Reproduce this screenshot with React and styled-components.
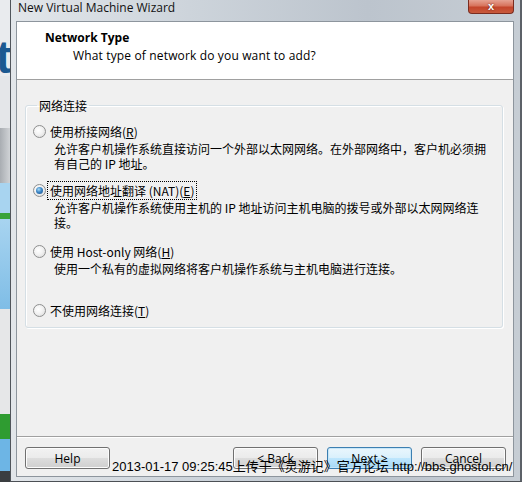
import React from 'react';
import styled, { createGlobalStyle } from 'styled-components';

const GlobalStyle = createGlobalStyle`
  html, body {
    margin: 0;
    padding: 0;
  }
  body {
    width: 522px;
    height: 482px;
    overflow: hidden;
    background: #e6e8ec;
    font-family: "Open Sans", "Noto Sans CJK SC", sans-serif;
    font-size: 12px;
    color: #000;
  }
`;

const options = [
  {
    id: 'bridged',
    label: <>使用桥接网络(<u>R</u>)</>,
    desc: ['允许客户机操作系统直接访问一个外部以太网网络。在外部网络中，客户机必须拥', '有自己的 IP 地址。'],
    gap: 0,
  },
  {
    id: 'nat',
    label: <>使用网络地址翻译 (NAT)(<u>E</u>)</>,
    desc: ['允许客户机操作系统使用主机的 IP 地址访问主机电脑的拨号或外部以太网网络连', '接。'],
    gap: 12,
    checked: true,
  },
  {
    id: 'host',
    label: <>使用 Host-only 网络(<u>H</u>)</>,
    desc: ['使用一个私有的虚拟网络将客户机操作系统与主机电脑进行连接。'],
    gap: 14,
  },
  {
    id: 'none',
    label: <>不使用网络连接(<u>T</u>)</>,
    desc: [],
    gap: 27,
  },
];

const desktopBlocks = [
  { h: 38, bg: '#e9ebee' },
  { h: 38, bg: '#e9ebee', glyph: 't' },
  { h: 52, bg: '#e4e6e9' },
  { h: 55, bg: 'linear-gradient(to right, #a9adb2, #d0d3d6)' },
  { h: 30, bg: '#a8d4f0' },
  { h: 6, bg: '#39a33a' },
  { h: 90, bg: 'linear-gradient(to bottom, #a8d4f0, #7fbde6)' },
  { h: 105, bg: '#e6e7e8' },
  { h: 25, bg: '#2f9c31' },
  { h: 32, bg: '#6db5e5' },
  { h: 11, bg: '#3a3d40' },
];

const App = () => {
  return (
    <Page>
      <GlobalStyle />
      <Desktop>
        {desktopBlocks.map((b, i) => (
          <DesktopBlock key={i} $h={b.h} $bg={b.bg}>
            {b.glyph}
          </DesktopBlock>
        ))}
      </Desktop>

      <Window>
        <TitleBar>
          <Title>New Virtual Machine Wizard</Title>
          <CloseButton>x</CloseButton>
        </TitleBar>

        <Client>
          <Header>
            <HeaderTitle>Network Type</HeaderTitle>
            <HeaderSub>What type of network do you want to add?</HeaderSub>
          </Header>

          <Body>
            <GroupBox>
              <Legend>网络连接</Legend>
              {options.map((o) => (
                <Option key={o.id} $gap={o.gap}>
                  <RadioRow>
                    <Radio $checked={o.checked} />
                    <RadioLabel $focused={o.checked}>{o.label}</RadioLabel>
                  </RadioRow>
                  {o.desc.length > 0 && (
                    <DescBlock>
                      {o.desc.map((line, i) => (
                        <div key={i}>{line}</div>
                      ))}
                    </DescBlock>
                  )}
                </Option>
              ))}
            </GroupBox>
          </Body>

          <Footer>
            <Button>Help</Button>
            <Spacer />
            <Button>&lt; Back</Button>
            <Button $primary>Next &gt;</Button>
            <Button>Cancel</Button>
          </Footer>
        </Client>
      </Window>

      <Watermark>2013-01-17 09:25:45上传于《灵游记》官方论坛 http://bbs.ghostol.cn/</Watermark>
    </Page>
  );
};

export default App;

const Page = styled.div`
  position: relative;
  display: flex;
  width: 522px;
  height: 482px;
  overflow: hidden;
`;

const Desktop = styled.div`
  width: 10px;
  flex-shrink: 0;
  display: flex;
  flex-direction: column;
  overflow: hidden;
`;

const DesktopBlock = styled.div`
  height: ${(p) => p.$h}px;
  background: ${(p) => p.$bg};
  font-family: "Liberation Sans", sans-serif;
  font-weight: bold;
  font-size: 46px;
  line-height: 38px;
  color: #1b5891;
  margin-left: ${(p) => (p.children ? '-4px' : '0')};
  flex-shrink: 0;
`;

const Window = styled.div`
  box-sizing: border-box;
  width: 512px;
  height: 482px;
  display: flex;
  flex-direction: column;
  border-left: 1px solid #50555b;
  border-right: 2px solid #5c6168;
  border-bottom: 1px solid #4c5055;
  padding: 0 6px 4px 5px;
  background: linear-gradient(to right, #e2e6ea 0%, #cdd4db 35%, #bcc4cd 70%, #c6cdd4 100%);
`;

const TitleBar = styled.div`
  height: 21px;
  display: flex;
  justify-content: space-between;
  align-items: flex-start;
  padding-left: 2px;
  flex-shrink: 0;
`;

const Title = styled.div`
  font-family: "Open Sans", sans-serif;
  font-size: 12px;
  line-height: 16px;
  color: #111;
`;

const CloseButton = styled.div`
  width: 46px;
  height: 14px;
  box-sizing: border-box;
  border: 1px solid #7a2c1f;
  border-top: none;
  border-radius: 0 0 4px 4px;
  background: linear-gradient(to bottom, #e6a292 0%, #d7735c 45%, #c4452b 55%, #c85a3c 100%);
  color: #fff;
  font-family: "Liberation Sans", sans-serif;
  font-weight: bold;
  font-size: 11px;
  line-height: 12px;
  text-align: center;
  text-shadow: 0 0 2px #5a1a10;
`;

const Client = styled.div`
  flex: 1;
  display: flex;
  flex-direction: column;
  border: 1px solid #8d959d;
  background: #f0f0f0;
  min-height: 0;
`;

const Header = styled.div`
  box-sizing: border-box;
  height: 58px;
  background: #fff;
  border-bottom: 1px solid #a0a0a0;
  padding: 8px 0 0 28px;
  flex-shrink: 0;
`;

const HeaderTitle = styled.div`
  font-weight: bold;
  line-height: 15px;
  color: #000;
`;

const HeaderSub = styled.div`
  margin-top: 3px;
  padding-left: 28px;
  line-height: 15px;
  color: #000;
  letter-spacing: 0.15px;
`;

const Body = styled.div`
  flex: 1;
  padding: 18px 10px 0 8px;
  font-family: "Noto Sans CJK SC", "Open Sans", sans-serif;
`;

const GroupBox = styled.fieldset`
  margin: 0;
  padding: 11px 7px 9px 7px;
  border: 1px solid #d5dfe5;
  border-radius: 3px;
  box-shadow: inset 1px 1px 0 #fff, 1px 1px 0 #fff;
  min-width: 0;
`;

const Legend = styled.legend`
  padding: 0 2px;
  margin-left: 4px;
  line-height: 15px;
`;

const Option = styled.div`
  margin-top: ${(p) => p.$gap}px;
`;

const RadioRow = styled.div`
  display: flex;
  align-items: center;
  gap: 3px;
  height: 15px;
`;

const Radio = styled.span`
  position: relative;
  box-sizing: border-box;
  width: 13px;
  height: 13px;
  border-radius: 50%;
  border: 1px solid #8e8f8f;
  background: radial-gradient(circle at 40% 40%, #ffffff 0%, #f2f2f2 45%, #d6d6d6 100%);
  flex-shrink: 0;

  &::after {
    content: '';
    display: ${(p) => (p.$checked ? 'block' : 'none')};
    position: absolute;
    left: 2px;
    top: 2px;
    width: 7px;
    height: 7px;
    border-radius: 50%;
    background: radial-gradient(circle at 40% 35%, #a9dcf7 0%, #3c86c6 45%, #174a85 100%);
  }
`;

const RadioLabel = styled.span`
  line-height: 15px;
  padding: 0 1px;
  outline: ${(p) => (p.$focused ? '1px dotted #000' : 'none')};
  outline-offset: 1px;
  white-space: nowrap;
`;

const DescBlock = styled.div`
  margin-top: 2px;
  padding-left: 21px;
  line-height: 15px;
  white-space: nowrap;
`;

const Footer = styled.div`
  box-sizing: border-box;
  height: 40px;
  border-top: 1px solid #a0a0a0;
  box-shadow: inset 0 1px 0 #fff;
  padding: 10px 7px 0 8px;
  display: flex;
  align-items: flex-start;
  gap: 9px;
  flex-shrink: 0;
`;

const Spacer = styled.div`
  flex: 1;
`;

const Button = styled.button`
  box-sizing: border-box;
  width: 85px;
  height: 22px;
  padding: 0;
  border-radius: 3px;
  font-family: "Open Sans", sans-serif;
  font-size: 12px;
  color: #000;
  border: 1px solid ${(p) => (p.$primary ? '#3c7fb1' : '#707070')};
  background: ${(p) =>
    p.$primary
      ? 'linear-gradient(to bottom, #eaf6fd 0%, #d9f0fc 50%, #bee6fd 50%, #a7d9f5 100%)'
      : 'linear-gradient(to bottom, #f2f2f2 0%, #ebebeb 50%, #dddddd 50%, #cfcfcf 100%)'};
  box-shadow: inset 0 0 0 1px ${(p) => (p.$primary ? '#c6e6f8' : '#fcfcfc')};
`;

const Watermark = styled.div`
  position: absolute;
  left: 112px;
  top: 459px;
  font-family: "Liberation Sans", "Noto Sans CJK SC", sans-serif;
  font-size: 13px;
  line-height: 15px;
  color: #000;
  white-space: nowrap;
  pointer-events: none;
`;
